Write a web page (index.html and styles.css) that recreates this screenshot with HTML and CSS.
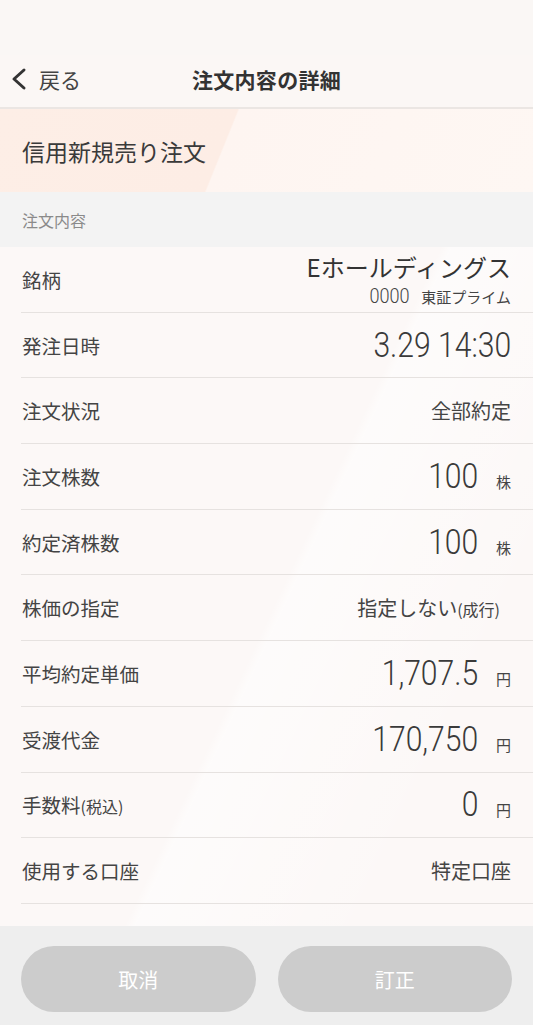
FILE: index.html
```html
<!DOCTYPE html>
<html lang="ja">
<head>
  <meta charset="UTF-8" />
  <meta name="viewport" content="width=device-width, initial-scale=1.0" />
  <title>注文内容の詳細</title>
  <link rel="stylesheet" href="styles.css">
</head>
<body>
  <div class="screen">
    <div class="status-bar"></div>

    <header class="nav">
      <a class="back" href="#">
        <svg width="18" height="24" viewBox="0 0 18 24" aria-hidden="true">
          <path d="M14 3 L4 12 L14 21" fill="none" stroke="#333" stroke-width="3" stroke-linecap="round" stroke-linejoin="round"/>
        </svg>
        <span>戻る</span>
      </a>
      <h1>注文内容の詳細</h1>
      <span></span>
    </header>

    <div class="order-type">信用新規売り注文</div>
    <div class="section-title">注文内容</div>

    <ul class="details">
      <li class="row">
        <span class="label">銘柄</span>
        <div class="stock">
          <div class="stock-name">Eホールディングス</div>
          <div class="stock-code"><span class="num small">0000</span><span class="market">東証プライム</span></div>
        </div>
      </li>
      <li class="row">
        <span class="label">発注日時</span>
        <span class="value"><span class="num">3.29 14:30</span></span>
      </li>
      <li class="row">
        <span class="label">注文状況</span>
        <span class="value text">全部約定</span>
      </li>
      <li class="row">
        <span class="label">注文株数</span>
        <span class="value"><span class="num">100</span><span class="unit">株</span></span>
      </li>
      <li class="row">
        <span class="label">約定済株数</span>
        <span class="value"><span class="num">100</span><span class="unit">株</span></span>
      </li>
      <li class="row">
        <span class="label">株価の指定</span>
        <span class="value text pad">指定しない<small>(成行)</small></span>
      </li>
      <li class="row">
        <span class="label">平均約定単価</span>
        <span class="value"><span class="num">1,707.5</span><span class="unit">円</span></span>
      </li>
      <li class="row">
        <span class="label">受渡代金</span>
        <span class="value"><span class="num">170,750</span><span class="unit">円</span></span>
      </li>
      <li class="row">
        <span class="label">手数料<small>(税込)</small></span>
        <span class="value"><span class="num">0</span><span class="unit">円</span></span>
      </li>
      <li class="row">
        <span class="label">使用する口座</span>
        <span class="value text">特定口座</span>
      </li>
    </ul>

    <footer class="actions">
      <button class="btn" disabled>取消</button>
      <button class="btn" disabled>訂正</button>
    </footer>
  </div>
</body>
</html>
```

FILE: styles.css
```css
html, body {
  margin: 0;
  padding: 0;
  background: #fcf9f8;
  font-family: "Noto Sans CJK JP", "Noto Sans", sans-serif;
  color: #333;
}

.screen {
  width: 533px;
  height: 1025px;
  display: flex;
  flex-direction: column;
  overflow: hidden;
  background:
    linear-gradient(115deg, rgba(255, 255, 255, 0) 55%, rgba(255, 255, 255, 0.5) 56%, rgba(255, 255, 255, 0) 80%),
    #fcf8f7;
}

.status-bar {
  height: 55px;
  background: #faf7f5;
}

.nav {
  height: 54px;
  box-sizing: border-box;
  padding-bottom: 4px;
  display: grid;
  grid-template-columns: 1fr auto 1fr;
  align-items: center;
  background: #fbf7f5;
  border-bottom: 2px solid #ebe6e3;
}

.back {
  display: flex;
  align-items: center;
  gap: 11px;
  padding-left: 10px;
  color: #444;
  text-decoration: none;
  font-size: 21px;
}

.back svg {
  display: block;
}

.nav h1 {
  margin: 0;
  font-size: 21px;
  font-weight: bold;
  color: #333;
  letter-spacing: 0.3px;
}

.order-type {
  height: 83px;
  display: flex;
  align-items: center;
  padding-left: 22px;
  font-size: 23px;
  color: #3a3a3a;
  background: linear-gradient(112deg, #fdeee6 0%, #fdede5 42%, #fef5f1 42.3%, #fef7f3 100%);
}

.section-title {
  height: 55px;
  display: flex;
  align-items: center;
  padding-left: 22px;
  font-size: 16px;
  color: #8a8a8a;
  background: #f3f3f3;
}

.details {
  list-style: none;
  margin: 0;
  padding: 0;
}

.row {
  height: 65.7px;
  box-sizing: border-box;
  margin-left: 21px;
  padding: 0 22px 0 1px;
  display: flex;
  align-items: center;
  justify-content: space-between;
  border-bottom: 1px solid #e6e2e0;
}

.label {
  font-size: 19.5px;
  color: #444;
}

.label small,
.value small {
  font-size: 16px;
}

.value {
  display: flex;
  align-items: baseline;
  color: #333;
}

.value.text {
  font-size: 20px;
  color: #444;
}

.value.pad {
  padding-right: 11px;
}

.num {
  display: inline-block;
  font-family: Roboto, "Noto Sans", sans-serif;
  font-weight: 300;
  font-size: 35px;
  line-height: 1;
  color: #3a3a3a;
  transform: scaleX(0.86);
  transform-origin: right center;
}

.unit {
  font-size: 15px;
  margin-left: 18px;
  color: #444;
}

.stock {
  text-align: right;
}

.stock-name {
  font-size: 24px;
  line-height: 35px;
  color: #333;
}

.stock-code {
  display: flex;
  justify-content: flex-end;
  align-items: baseline;
  line-height: 24px;
}

.num.small {
  font-size: 21px;
  line-height: 24px;
  color: #444;
}

.market {
  font-size: 15px;
  margin-left: 12px;
  color: #444;
}

.actions {
  margin-top: auto;
  height: 99px;
  box-sizing: border-box;
  padding: 20px 21px 0;
  display: grid;
  grid-template-columns: 1fr 1fr;
  gap: 22px;
  background: #eeeeee;
}

.btn {
  height: 66px;
  border: none;
  border-radius: 33px;
  background: #cccccc;
  color: #fff;
  font-family: inherit;
  font-size: 20px;
}
```
